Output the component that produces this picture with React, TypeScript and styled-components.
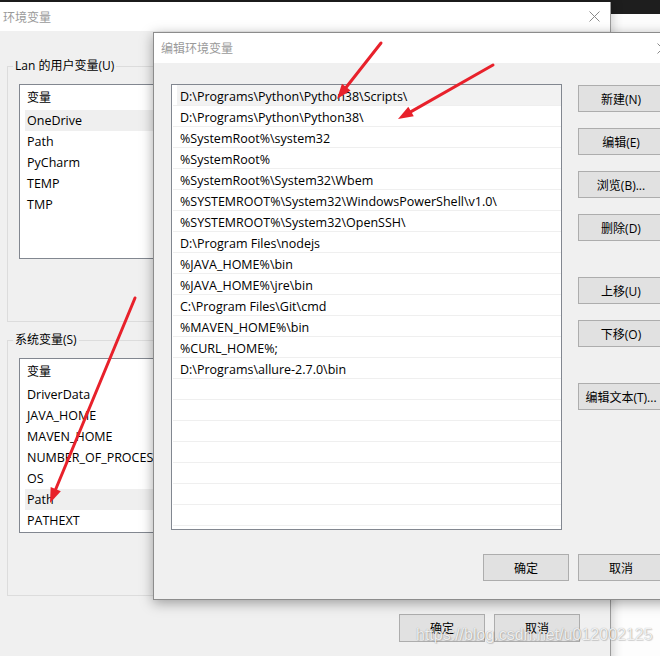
import React from 'react';
import styled, { createGlobalStyle } from 'styled-components';

const GlobalStyle = createGlobalStyle`
  html, body {
    margin: 0;
    padding: 0;
  }
  body {
    font-family: "Open Sans", "Noto Sans CJK SC", sans-serif;
    font-size: 12px;
    color: #000;
  }
  * {
    box-sizing: border-box;
  }
`;

const Desktop = styled.div`
  position: relative;
  width: 660px;
  height: 656px;
  overflow: hidden;
  background: #fdfdfd;
`;

const TopStrip = styled.div`
  height: 14px;
  background: #1e1e1e;
`;

// background window: 环境变量
const OuterWindow = styled.div`
  position: absolute;
  left: 0;
  top: 2px;
  width: 611px;
  height: 680px;
  background: #f0f0f0;
  border-right: 1px solid #9b9b9b;
  box-shadow: 2px 0 10px rgba(0, 0, 0, 0.18);
  display: flex;
  flex-direction: column;
`;

const TitleBar = styled.div<{ $height: number; $padLeft: number; $padRight: number }>`
  height: ${p => p.$height}px;
  flex: none;
  background: #fff;
  display: flex;
  align-items: center;
  justify-content: space-between;
  padding: 0 ${p => p.$padRight}px 0 ${p => p.$padLeft}px;
  color: #9a9a9a;
  font-size: 12px;
`;

const OuterBody = styled.div`
  padding: 27px 12px 0 7px;
  display: flex;
  flex-direction: column;
`;

const GroupBox = styled.fieldset<{ $gapTop?: number }>`
  margin: ${p => p.$gapTop || 0}px 0 0 0;
  border: 1px solid #dcdcdc;
  padding: 10px 11px 62px 11px;
  min-width: 0;
`;

const GroupLabel = styled.legend`
  padding: 0 2px;
  margin-left: -6px;
  line-height: 16px;
  font-size: 12px;
`;

const VarList = styled.div`
  height: 175px;
  background: #fff;
  border: 1px solid #828790;
  overflow: hidden;
  font-size: 12.5px;
`;

const VarHeader = styled.div`
  height: 25px;
  line-height: 25px;
  padding-left: 7px;
  font-size: 12px;
`;

const VarRow = styled.div<{ $selected?: boolean }>`
  height: 21px;
  line-height: 21px;
  margin-left: 5px;
  padding-left: 2px;
  background: ${p => (p.$selected ? '#efefef' : 'transparent')};
  white-space: nowrap;
`;

const WinButton = styled.button<{ $height?: number }>`
  width: 86px;
  height: ${p => p.$height || 27}px;
  flex: none;
  background: #e1e1e1;
  border: 1px solid #adadad;
  border-radius: 0;
  padding: 0;
  font-family: inherit;
  font-size: 12px;
  color: #000;
  white-space: nowrap;
`;

const OuterFooter = styled.div`
  display: flex;
  justify-content: flex-end;
  gap: 9px;
  margin-top: 18px;
  padding-right: 18px;
`;

// foreground dialog: 编辑环境变量
const Dialog = styled.div`
  position: absolute;
  left: 153px;
  top: 32px;
  width: 530px;
  height: 568px;
  background: #f0f0f0;
  border: 1px solid #8c8c8c;
  box-shadow: 0 3px 12px rgba(0, 0, 0, 0.35);
  display: flex;
  flex-direction: column;
`;

const DialogBody = styled.div`
  padding: 21px 0 0 17px;
  width: 510px;
`;

const MainRow = styled.div`
  display: flex;
  gap: 16px;
`;

const PathList = styled.div`
  width: 391px;
  height: 446px;
  background: #fff;
  border: 1px solid #828790;
  overflow: hidden;
  font-size: 12.5px;
`;

const PathRow = styled.div<{ $selected?: boolean }>`
  height: 21px;
  padding: 3px 0 0 7px;
  line-height: 17px;
  margin-left: 1px;
  border-bottom: 1px solid #efefef;
  white-space: nowrap;
  background: ${p =>
    p.$selected ? 'linear-gradient(to right, #fff 4px, #f2f2f2 4px)' : 'transparent'};
`;

const ButtonColumn = styled.div`
  display: flex;
  flex-direction: column;
  gap: 36px;
  padding-top: 1px;
`;

const ButtonGroup = styled.div`
  display: flex;
  flex-direction: column;
  gap: 16px;
`;

const DialogFooter = styled.div`
  display: flex;
  justify-content: flex-end;
  gap: 9px;
  margin-top: 24px;
  width: 493px;
`;

const CloseIcon = ({ color = '#7a7a7a' }: { color?: string }) => (
  <svg width="11" height="11" viewBox="0 0 11 11">
    <path d="M0.5 0.5 L10.5 10.5 M10.5 0.5 L0.5 10.5" stroke={color} strokeWidth="1" fill="none" />
  </svg>
);

const Overlay = styled.svg`
  position: absolute;
  left: 0;
  top: 0;
  pointer-events: none;
`;

const Watermark = styled.div`
  position: absolute;
  left: 416px;
  top: 626px;
  font-family: "Liberation Sans", Arial, sans-serif;
  font-size: 16px;
  color: rgba(255, 255, 255, 0.85);
  text-shadow: 0 0 1px rgba(0, 0, 0, 0.35), 1px 1px 1px rgba(0, 0, 0, 0.15);
  white-space: nowrap;
  pointer-events: none;
`;

const userVars = ['OneDrive', 'Path', 'PyCharm', 'TEMP', 'TMP'];
const systemVars = ['DriverData', 'JAVA_HOME', 'MAVEN_HOME', 'NUMBER_OF_PROCESSORS', 'OS', 'Path', 'PATHEXT'];

const paths = [
  'D:\\Programs\\Python\\Python38\\Scripts\\',
  'D:\\Programs\\Python\\Python38\\',
  '%SystemRoot%\\system32',
  '%SystemRoot%',
  '%SystemRoot%\\System32\\Wbem',
  '%SYSTEMROOT%\\System32\\WindowsPowerShell\\v1.0\\',
  '%SYSTEMROOT%\\System32\\OpenSSH\\',
  'D:\\Program Files\\nodejs',
  '%JAVA_HOME%\\bin',
  '%JAVA_HOME%\\jre\\bin',
  'C:\\Program Files\\Git\\cmd',
  '%MAVEN_HOME%\\bin',
  '%CURL_HOME%;',
  'D:\\Programs\\allure-2.7.0\\bin',
];

const rows = [...paths, ...Array(8).fill('')];

// red annotation arrow drawn from tail to tip
function Arrow({ x1, y1, x2, y2 }: { x1: number; y1: number; x2: number; y2: number }) {
  const dx = x2 - x1;
  const dy = y2 - y1;
  const len = Math.hypot(dx, dy);
  const ux = dx / len;
  const uy = dy / len;
  const head = 15;
  const half = 5.5;
  const bx = x2 - ux * head;
  const by = y2 - uy * head;
  const pts = [
    `${x2},${y2}`,
    `${bx - uy * half},${by + ux * half}`,
    `${bx + uy * half},${by - ux * half}`,
  ].join(' ');
  return (
    <g>
      <line x1={x1} y1={y1} x2={bx + ux * 2} y2={by + uy * 2} stroke="#e8212b" strokeWidth="3" strokeLinecap="round" />
      <polygon points={pts} fill="#e8212b" />
    </g>
  );
}

export default function App() {
  return (
    <Desktop>
      <GlobalStyle />
      <TopStrip />

      <OuterWindow>
        <TitleBar $height={29} $padLeft={3} $padRight={10}>
          <span>环境变量</span>
          <CloseIcon color="#8a8a8a" />
        </TitleBar>
        <OuterBody>
          <GroupBox>
            <GroupLabel>Lan 的用户变量(U)</GroupLabel>
            <VarList>
              <VarHeader>变量</VarHeader>
              {userVars.map((v, i) => (
                <VarRow key={v} $selected={i === 0}>{v}</VarRow>
              ))}
            </VarList>
          </GroupBox>
          <GroupBox $gapTop={10}>
            <GroupLabel>系统变量(S)</GroupLabel>
            <VarList>
              <VarHeader>变量</VarHeader>
              {systemVars.map((v, i) => (
                <VarRow key={v + i} $selected={i === 5}>{v}</VarRow>
              ))}
            </VarList>
          </GroupBox>
          <OuterFooter>
            <WinButton $height={28}>确定</WinButton>
            <WinButton $height={28}>取消</WinButton>
          </OuterFooter>
        </OuterBody>
      </OuterWindow>

      <Dialog>
        <TitleBar $height={30} $padLeft={7} $padRight={14}>
          <span>编辑环境变量</span>
          <CloseIcon color="#8a8a8a" />
        </TitleBar>
        <DialogBody>
          <MainRow>
            <PathList>
              {rows.map((p, i) => (
                <PathRow key={i} $selected={i === 0}>{p}</PathRow>
              ))}
            </PathList>
            <ButtonColumn>
              <ButtonGroup>
                <WinButton>新建(N)</WinButton>
                <WinButton>编辑(E)</WinButton>
                <WinButton>浏览(B)...</WinButton>
                <WinButton>删除(D)</WinButton>
              </ButtonGroup>
              <ButtonGroup>
                <WinButton>上移(U)</WinButton>
                <WinButton>下移(O)</WinButton>
              </ButtonGroup>
              <ButtonGroup>
                <WinButton>编辑文本(T)...</WinButton>
              </ButtonGroup>
            </ButtonColumn>
          </MainRow>
          <DialogFooter>
            <WinButton>确定</WinButton>
            <WinButton>取消</WinButton>
          </DialogFooter>
        </DialogBody>
      </Dialog>

      <Watermark>https://blog.csdn.net/u012002125</Watermark>

      <Overlay width="660" height="656" viewBox="0 0 660 656">
        <Arrow x1={381} y1={43} x2={337} y2={99} />
        <Arrow x1={493} y1={65} x2={398} y2={119} />
        <Arrow x1={135} y1={298} x2={50} y2={503} />
      </Overlay>
    </Desktop>
  );
}
